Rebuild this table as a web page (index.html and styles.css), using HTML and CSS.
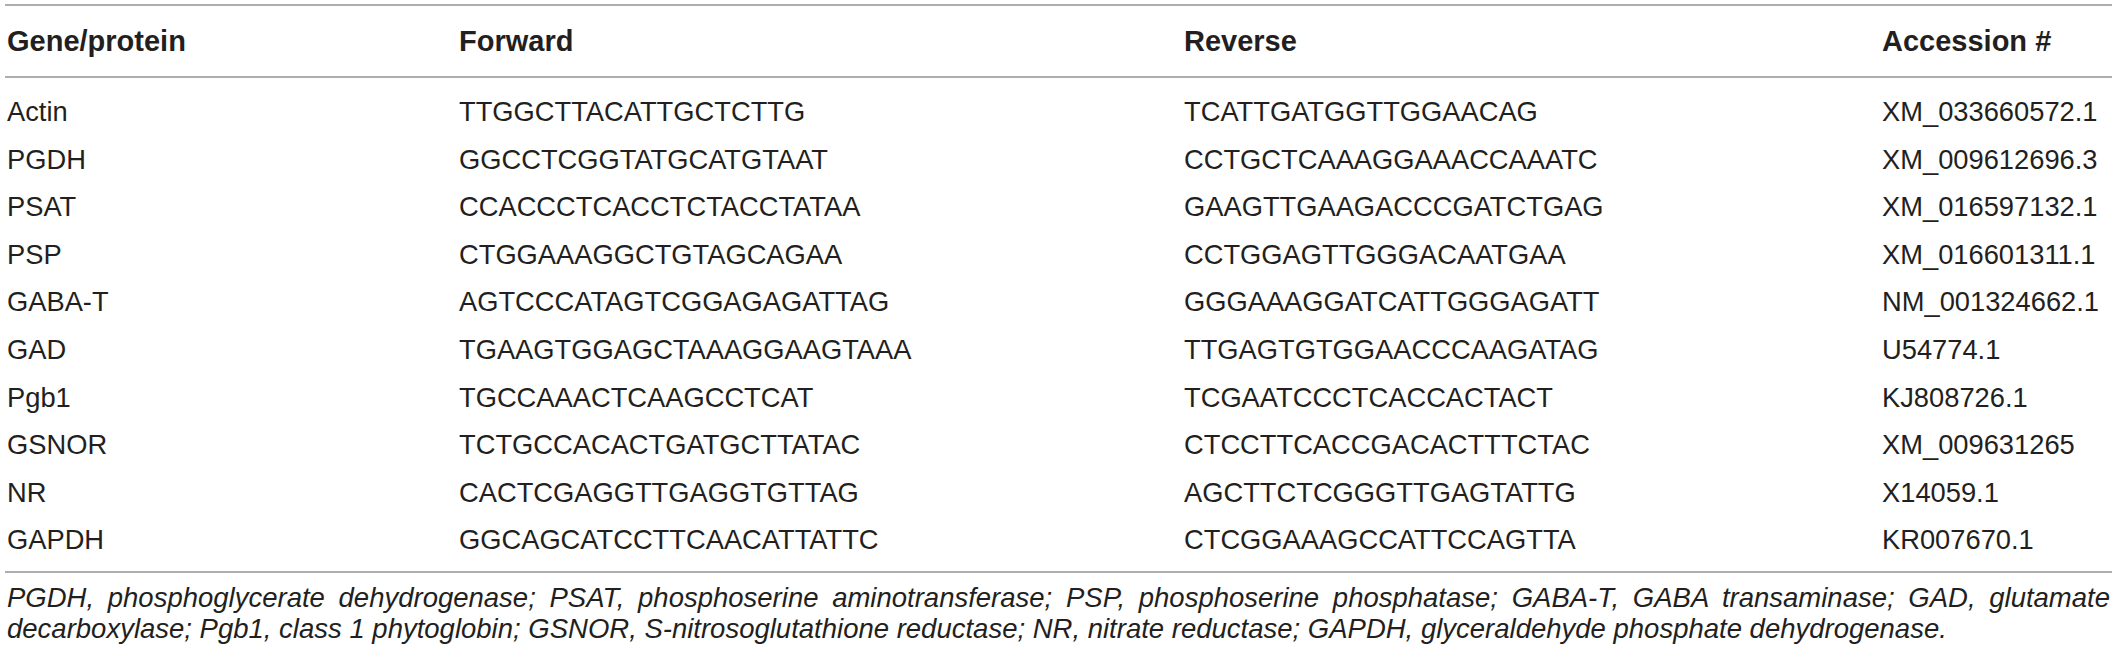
FILE: index.html
```html
<!DOCTYPE html>
<html lang="en">
<head>
<meta charset="utf-8">
<title>Primer table</title>
<link rel="stylesheet" href="styles.css">
</head>
<body>
<div class="wrap">
  <table class="primers">
    <colgroup>
      <col class="c1"><col class="c2"><col class="c3"><col class="c4">
    </colgroup>
    <thead>
      <tr><th>Gene/protein</th><th>Forward</th><th>Reverse</th><th>Accession #</th></tr>
    </thead>
    <tbody>
      <tr class="first"><td>Actin</td><td>TTGGCTTACATTGCTCTTG</td><td>TCATTGATGGTTGGAACAG</td><td>XM_033660572.1</td></tr>
      <tr><td>PGDH</td><td>GGCCTCGGTATGCATGTAAT</td><td>CCTGCTCAAAGGAAACCAAATC</td><td>XM_009612696.3</td></tr>
      <tr><td>PSAT</td><td>CCACCCTCACCTCTACCTATAA</td><td>GAAGTTGAAGACCCGATCTGAG</td><td>XM_016597132.1</td></tr>
      <tr><td>PSP</td><td>CTGGAAAGGCTGTAGCAGAA</td><td>CCTGGAGTTGGGACAATGAA</td><td>XM_016601311.1</td></tr>
      <tr><td>GABA-T</td><td>AGTCCCATAGTCGGAGAGATTAG</td><td>GGGAAAGGATCATTGGGAGATT</td><td>NM_001324662.1</td></tr>
      <tr><td>GAD</td><td>TGAAGTGGAGCTAAAGGAAGTAAA</td><td>TTGAGTGTGGAACCCAAGATAG</td><td>U54774.1</td></tr>
      <tr><td>Pgb1</td><td>TGCCAAACTCAAGCCTCAT</td><td>TCGAATCCCTCACCACTACT</td><td>KJ808726.1</td></tr>
      <tr><td>GSNOR</td><td>TCTGCCACACTGATGCTTATAC</td><td>CTCCTTCACCGACACTTTCTAC</td><td>XM_009631265</td></tr>
      <tr><td>NR</td><td>CACTCGAGGTTGAGGTGTTAG</td><td>AGCTTCTCGGGTTGAGTATTG</td><td>X14059.1</td></tr>
      <tr class="last"><td>GAPDH</td><td>GGCAGCATCCTTCAACATTATTC</td><td>CTCGGAAAGCCATTCCAGTTA</td><td>KR007670.1</td></tr>
    </tbody>
  </table>
  <p class="note">PGDH, phosphoglycerate dehydrogenase; PSAT, phosphoserine aminotransferase; PSP, phosphoserine phosphatase; GABA-T, GABA transaminase; GAD, glutamate decarboxylase; Pgb1, class 1 phytoglobin; GSNOR, S-nitrosoglutathione reductase; NR, nitrate reductase; GAPDH, glyceraldehyde phosphate dehydrogenase.</p>
</div>
</body>
</html>
```

FILE: styles.css
```css
html, body {
  margin: 0;
  padding: 0;
  background: #ffffff;
}

body {
  font-family: "Liberation Sans", Arial, sans-serif;
  color: #231f20;
}

.wrap {
  margin: 4px 0 0 5px;
  width: 2107px;
}

.primers {
  width: 100%;
  border-collapse: collapse;
  table-layout: fixed;
  border-top: 2px solid #aeaeae;
  border-bottom: 2px solid #aeaeae;
}

.c1 { width: 452px; }
.c2 { width: 725px; }
.c3 { width: 698px; }
.c4 { width: auto; }

.primers th,
.primers td {
  padding: 0 0 0 2px;
  text-align: left;
  white-space: nowrap;
}

.primers th {
  font-size: 29px;
  font-weight: bold;
  height: 70px;
  vertical-align: middle;
  border-bottom: 2px solid #aeaeae;
}

.primers td {
  font-size: 27.3px;
  height: 47.6px;
  line-height: 47.6px;
  vertical-align: middle;
  font-weight: normal;
}

.primers tr.first td {
  padding-top: 10px;
}

.primers tr.last td {
  padding-bottom: 7px;
}

.note {
  margin: 0;
  padding: 9px 2px 0 2px;
  font-size: 27.5px;
  line-height: 31px;
  font-style: italic;
  text-align: justify;
}
```
